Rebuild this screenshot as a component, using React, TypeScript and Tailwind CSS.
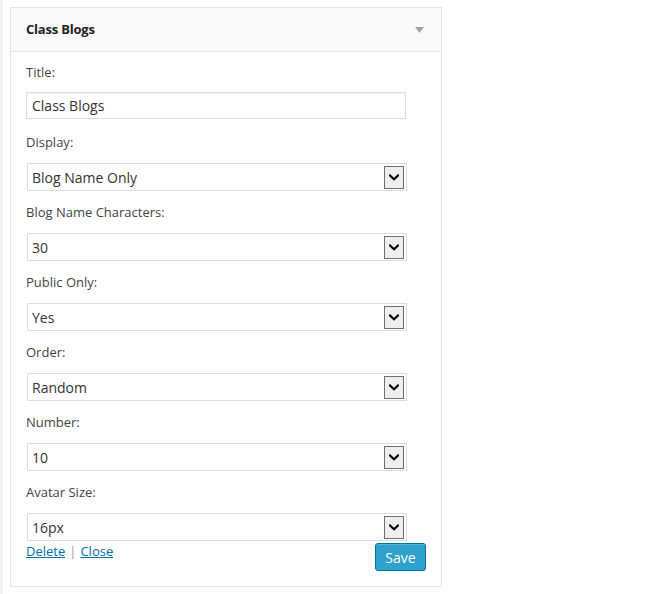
import React from "react";

const font = { fontFamily: '"Open Sans", "Liberation Sans", sans-serif' };

function Chevron() {
  return (
    <div className="absolute right-[2px] top-[2px] w-[20px] h-[23px] border border-[#707070] bg-[#eeeeee] flex items-center justify-center">
      <svg width="10" height="7" viewBox="0 0 10 7">
        <path d="M1 1.5 L5 5.2 L9 1.5" fill="none" stroke="#000" strokeWidth="2.2" strokeLinecap="square" />
      </svg>
    </div>
  );
}

function SelectBox({ value }: { value: string }) {
  return (
    <div className="relative ml-[1px] w-[380px] h-[28px] border border-[#dddddd] bg-white flex items-center pl-[4px] text-[14px] text-[#333]">
      {value}
      <Chevron />
    </div>
  );
}

function Group({ label, value }: { label: string; value: string }) {
  return (
    <div className="mt-[11px]">
      <div className="leading-[20px] text-[13px] text-[#444] mb-[11px]">{label}</div>
      <SelectBox value={value} />
    </div>
  );
}

export default function App() {
  const groups: [string, string][] = [
    ["Display:", "Blog Name Only"],
    ["Blog Name Characters:", "30"],
    ["Public Only:", "Yes"],
    ["Order:", "Random"],
    ["Number:", "10"],
    ["Avatar Size:", "16px"],
  ];
  return (
    <div className="w-[650px] h-[594px] bg-white border-l-[3px] border-[#f1f1f1] pl-[7px] pt-[7px]" style={font}>
      <div className="w-[432px] h-[580px] border border-[#e5e5e5] bg-white flex flex-col">
        <div className="h-[44px] bg-[#fafafa] border-b border-[#e5e5e5] flex items-center justify-between pl-[15px] pr-[17px]">
          <span className="text-[13px] font-bold text-[#222] tracking-[-0.2px]">Class Blogs</span>
          <svg width="9" height="6" viewBox="0 0 9 6">
            <path d="M0 0 L9 0 L4.5 6 Z" fill="#a0a5aa" />
          </svg>
        </div>
        <div className="pl-[15px] pr-[15px] pt-[10px]">
          <div className="leading-[20px] text-[13px] text-[#444] mb-[10px]">Title:</div>
          <div className="w-[380px] h-[27px] border border-[#dddddd] shadow-[inset_0_1px_2px_rgba(0,0,0,0.07)] flex items-center pl-[5px] text-[14px] text-[#333]">
            Class Blogs
          </div>
          <div className="h-[2px]" />
          {groups.map(([l, v]) => (
            <Group key={l} label={l} value={v} />
          ))}
          <div className="flex justify-between items-start">
            <div className="leading-[20px] text-[13px] text-[#444]">
              <a className="text-[#0073aa] underline cursor-pointer">Delete</a>
              <span className="text-[#999] mx-[4px]">|</span>
              <a className="text-[#0073aa] underline cursor-pointer">Close</a>
            </div>
            <button className="mt-[2px] w-[51px] h-[28px] rounded-[3px] bg-[#2ea2cc] border border-[#0074a2] text-white text-[14px] shadow-[inset_0_1px_0_rgba(120,200,230,0.5)]">
              Save
            </button>
          </div>
        </div>
      </div>
    </div>
  );
}
